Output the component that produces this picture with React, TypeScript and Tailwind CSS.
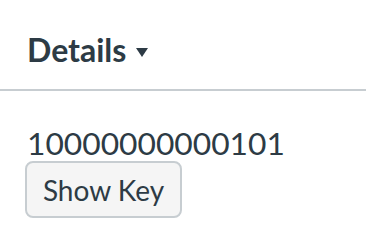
import React from "react";

const App = () => {
  return (
    <div className="w-[366px] h-[246px] bg-white text-[#2d3b45] font-['Lato',sans-serif]">
      <div className="pt-[28px] pl-[27px] h-[91px] border-b-2 border-[#c7cdd1]">
        <button className="flex items-center gap-[10px] text-[32px] font-bold leading-[44px]">
          Details
          <svg width="12" height="9" viewBox="0 0 12 9" className="mt-[4px]">
            <path d="M0 0 L12 0 L6 9 Z" fill="#2d3b45" />
          </svg>
        </button>
      </div>
      <div className="pl-[25px] pt-[33px]">
        <div className="pl-[2px] text-[31.75px] leading-[38px]">10000000000101</div>
        <button className="mt-[-1px] w-[157px] h-[57px] rounded-[8px] border-2 border-[#c7cdd1] bg-[#f5f5f5] text-[28px] leading-none">
          Show Key
        </button>
      </div>
    </div>
  );
};

export default App;
